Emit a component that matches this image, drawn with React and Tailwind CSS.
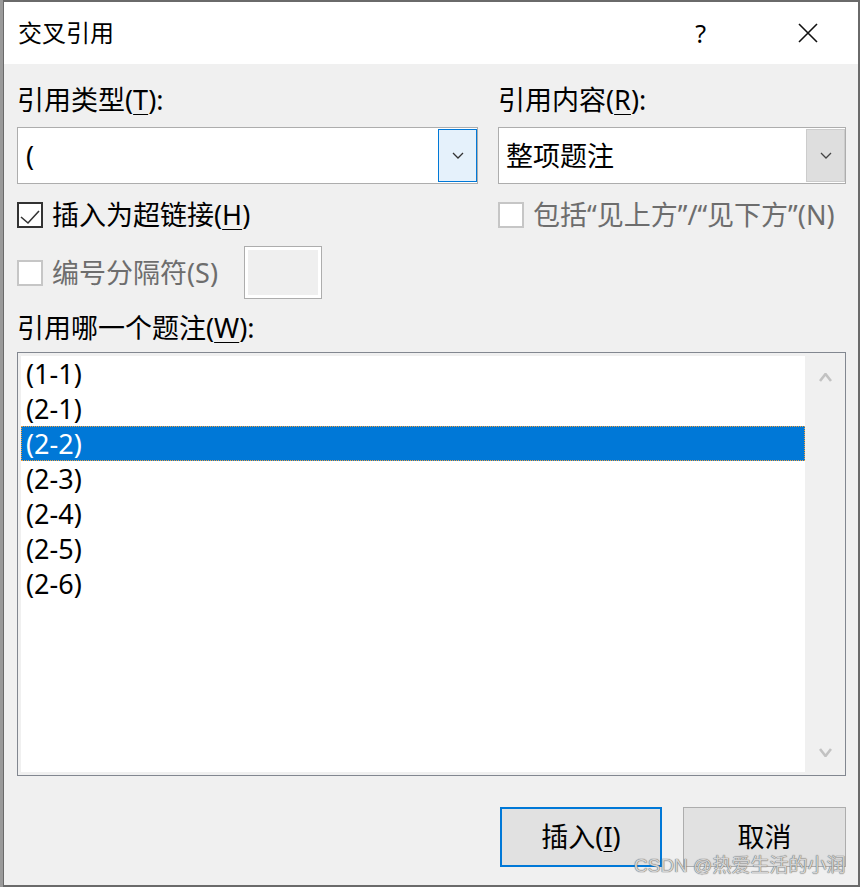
import React from "react";

const F = { fontFamily: '"Noto Sans", "Noto Sans CJK SC", sans-serif' };

function Chevron({ color = "#333", up = false, w = 12, h = 7, sw = 1.3 }) {
  return (
    <svg width={w} height={h} viewBox={`0 0 ${w} ${h}`} fill="none">
      <path
        d={up ? `M1 ${h - 1} L${w / 2} 1 L${w - 1} ${h - 1}` : `M1 1 L${w / 2} ${h - 1} L${w - 1} 1`}
        stroke={color}
        strokeWidth={sw}
      />
    </svg>
  );
}

function U({ children }) {
  return <span className="underline underline-offset-[4px] decoration-1">{children}</span>;
}

function CheckBox({ checked, disabled }) {
  return (
    <div
      className={
        "w-[26px] h-[26px] shrink-0 border-2 flex items-center justify-center " +
        (disabled ? "border-[#c6c6c6] bg-white" : "border-[#333333] bg-white")
      }
    >
      {checked && (
        <svg width="22" height="22" viewBox="0 0 22 22" fill="none">
          <path d="M2 13 L9 19 L20 7" stroke="#333" strokeWidth="1.6" />
        </svg>
      )}
    </div>
  );
}

const items = ["(1-1)", "(2-1)", "(2-2)", "(2-3)", "(2-4)", "(2-5)", "(2-6)"];

export default function App() {
  return (
    <div className="w-[860px] h-[887px] flex bg-[#8a8a8a] relative" style={F}>
      <div className="w-[3px] bg-[#9a9a9a]" />
      <div className="flex-1 flex flex-col border-l border-t-2 border-r-2 border-b-2 border-[#6a6a6a] bg-[#f0f0f0]">
        {/* Title bar */}
        <div className="h-[62px] bg-white flex items-center pl-[14px] shrink-0">
          <div className="text-[24px] leading-[30px] text-black">交叉引用</div>
          <div className="ml-auto text-[25px] leading-[30px] text-black mr-[92px]">?</div>
          <div className="mr-[40px]">
            <svg width="20" height="20" viewBox="0 0 20 20" fill="none">
              <path d="M1 1 L19 19 M19 1 L1 19" stroke="#111" strokeWidth="1.6" />
            </svg>
          </div>
        </div>

        {/* Body */}
        <div className="flex-1 flex flex-col pl-[13px] pr-[12px] pt-[16px] text-black">
          <div className="flex gap-[20px]">
            {/* Left column */}
            <div className="w-[461px] flex flex-col">
              <div className="h-[40px] flex items-center text-[27px] leading-[40px]">
                引用类型(<U>T</U>):
              </div>
              <div className="mt-[7px] h-[57px] border border-[#adadad] bg-white flex">
                <div className="flex-1 pl-[8px] flex items-center text-[27px] leading-[40px]">(</div>
                <div className="mt-[1px] h-[53px] w-[39px] border border-[#0078d7] bg-[#e5f1fb] flex items-center justify-center">
                  <Chevron />
                </div>
              </div>
            </div>
            {/* Right column */}
            <div className="w-[348px] flex flex-col">
              <div className="h-[40px] flex items-center text-[27px] leading-[40px]">
                引用内容(<U>R</U>):
              </div>
              <div className="mt-[7px] h-[57px] border border-[#adadad] bg-white flex">
                <div className="flex-1 pl-[7px] flex items-center text-[27px] leading-[40px]">整项题注</div>
                <div className="mt-[1px] h-[53px] w-[39px] border border-[#cccccc] bg-[#dedede] flex items-center justify-center">
                  <Chevron color="#444" />
                </div>
              </div>
            </div>
          </div>

          {/* Checkbox row */}
          <div className="flex gap-[20px] mt-[11px] h-[40px]">
            <div className="w-[461px] flex items-center gap-[9px]">
              <CheckBox checked />
              <span className="text-[27px] leading-[40px]">
                插入为超链接(<U>H</U>)
              </span>
            </div>
            <div className="w-[348px] flex items-center gap-[9px]">
              <CheckBox disabled />
              <span className="text-[27px] leading-[40px] text-[#6d6d6d] whitespace-nowrap">
                包括“见上方”/“见下方”(N)
              </span>
            </div>
          </div>

          {/* Separator row */}
          <div className="flex items-center mt-[11px] h-[53px]">
            <CheckBox disabled />
            <span className="ml-[9px] text-[27px] leading-[40px] text-[#6d6d6d] whitespace-nowrap">
              编号分隔符(S)
            </span>
            <div className="ml-[26px] w-[78px] h-[53px] border border-[#adadad] bg-white p-[3px]">
              <div className="w-full h-full bg-[#efefef]" />
            </div>
          </div>

          {/* Label W */}
          <div className="mt-[9px] h-[40px] flex items-center text-[27px] leading-[40px]">
            引用哪一个题注(<U>W</U>):
          </div>

          {/* List */}
          <div className="mt-[4px] h-[424px] border border-[#828790] bg-[#f0f0f0] flex pt-[3px] pl-[3px] pb-[3px]">
            <div className="flex-1 bg-white flex flex-col">
              {items.map((t, i) =>
                i === 2 ? (
                  <div
                    key={t}
                    className="h-[35px] bg-[#0078d7] border border-dotted border-[#f0a040] pl-[4px] flex items-center text-white text-[27px] leading-[35px]"
                  >
                    {t}
                  </div>
                ) : (
                  <div key={t} className="h-[35px] pl-[5px] flex items-center text-[27px] leading-[35px]">
                    {t}
                  </div>
                )
              )}
            </div>
            <div className="w-[40px] flex flex-col items-center justify-between pt-[17px] pb-[15px]">
              <Chevron up color="#c2c2c2" w={13} h={9} sw={2.6} />
              <Chevron color="#c2c2c2" w={13} h={9} sw={2.6} />
            </div>
          </div>

          {/* Buttons */}
          <div className="mt-[31px] flex justify-end gap-[21px]">
            <div className="w-[162px] h-[60px] border-2 border-[#0078d7] bg-[#e1e1e1] flex items-center justify-center text-[27px] leading-[40px]">
              插入(<U>I</U>)
            </div>
            <div className="w-[163px] h-[60px] border border-[#adadad] bg-[#e1e1e1] flex items-center justify-center text-[27px] leading-[40px]">
              取消
            </div>
          </div>
        </div>
      </div>

      {/* Watermark overlay */}
      <div
        className="absolute left-[634px] top-[853px] text-[19px] leading-[26px] text-[#d4d4d4] whitespace-nowrap [text-shadow:0_0_1px_#666,0_0_1px_#666]"
        style={{ fontFamily: '"Liberation Sans", "Noto Sans CJK SC", sans-serif' }}
      >
        CSDN @热爱生活的小润
      </div>
    </div>
  );
}
